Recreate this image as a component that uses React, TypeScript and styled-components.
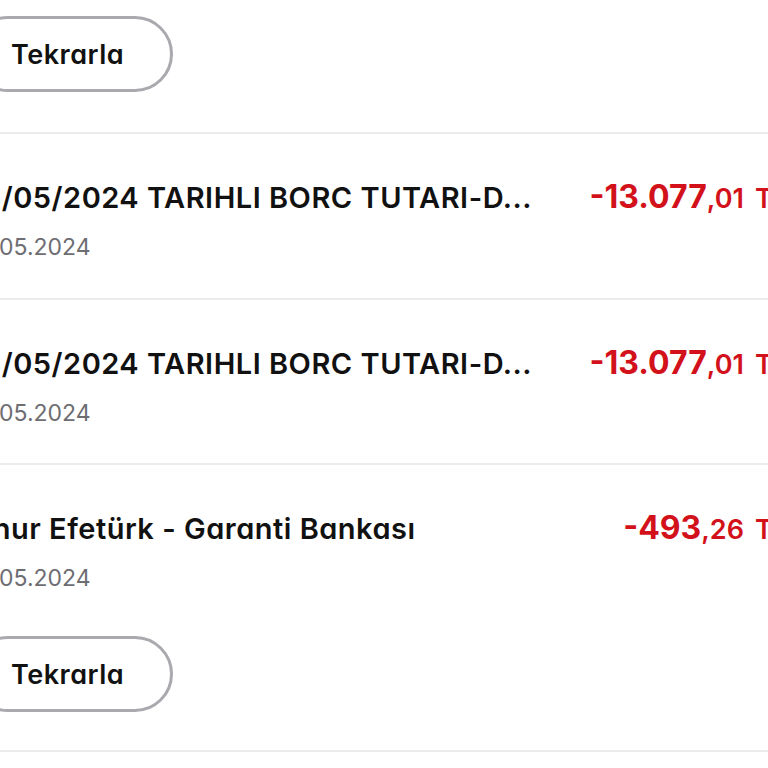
import styled, { createGlobalStyle } from "styled-components"

const GlobalStyle = createGlobalStyle`
  html, body {
    margin: 0;
    padding: 0;
    background: #ffffff;
    overflow: hidden;
  }
  body {
    font-family: Inter, "Noto Sans", "DejaVu Sans", sans-serif;
    font-feature-settings: "cv11" 1;
    color: #111111;
    -webkit-font-smoothing: antialiased;
  }
`

const colors = {
  text: "#111111",
  subdue: "#6d6d72",
  red: "#d2111b",
  line: "#ececee",
  pillBorder: "#a9a9ae",
}

const Page = styled.main`
  margin: 0 -20px 0 -30px;
  padding-top: 16px;
  display: flex;
  flex-direction: column;
`

const RepeatButton = styled.button`
  align-self: flex-start;
  height: 76px;
  padding: 0 46px 0 38px;
  border: 3px solid ${colors.pillBorder};
  border-radius: 40px;
  background: #ffffff;
  font-family: inherit;
  font-feature-settings: "cv11" 1;
  font-size: 27px;
  letter-spacing: 0.5px;
  font-weight: 600;
  color: ${colors.text};
  cursor: pointer;
`

const TopAction = styled.div`
  display: flex;
  padding-bottom: 40px;
`

const Transaction = styled.section`
  border-top: 2px solid ${colors.line};
  padding: 46px 0 36.5px;
  display: flex;
  flex-direction: column;
`

const TopLine = styled.div`
  display: flex;
  align-items: baseline;
  justify-content: space-between;
  gap: 24px;
`

const Title = styled.h3`
  margin: 0;
  font-size: 29px;
  line-height: 34px;
  letter-spacing: 0.5px;
  font-weight: 600;
  white-space: nowrap;
  overflow: hidden;
  color: ${colors.text};
`

const Amount = styled.div`
  flex-shrink: 0;
  font-size: 32px;
  line-height: 34px;
  font-weight: 700;
  color: ${colors.red};
  white-space: nowrap;
`

const Cents = styled.span`
  font-size: 27px;
  font-weight: 600;
`

const Currency = styled.span`
  margin-left: 11px;
  font-size: 27px;
  font-weight: 600;
`

const DateText = styled.div`
  margin-top: 17px;
  font-size: 23px;
  line-height: 28px;
  color: ${colors.subdue};
`

const ItemAction = styled.div`
  display: flex;
  margin-top: 44px;
  margin-bottom: 1px;
`

type Item = {
  title: string
  whole: string
  cents: string
  date: string
  repeat?: boolean
}

const items: Item[] = [
  { title: "13/05/2024 TARIHLI BORC TUTARI-D...", whole: "-13.077", cents: ",01", date: "13.05.2024" },
  { title: "13/05/2024 TARIHLI BORC TUTARI-D...", whole: "-13.077", cents: ",01", date: "13.05.2024" },
  { title: "Onur Efetürk - Garanti Bankası", whole: "-493", cents: ",26", date: "13.05.2024", repeat: true },
]

export default function App() {
  return (
    <>
      <GlobalStyle />
      <Page>
        <TopAction>
          <RepeatButton>Tekrarla</RepeatButton>
        </TopAction>

        {items.map((item, i) => (
          <Transaction key={i}>
            <TopLine>
              <Title>{item.title}</Title>
              <Amount>
                {item.whole}
                <Cents>{item.cents}</Cents>
                <Currency>TL</Currency>
              </Amount>
            </TopLine>
            <DateText>{item.date}</DateText>
            {item.repeat && (
              <ItemAction>
                <RepeatButton>Tekrarla</RepeatButton>
              </ItemAction>
            )}
          </Transaction>
        ))}
        <Transaction />
      </Page>
    </>
  )
}
